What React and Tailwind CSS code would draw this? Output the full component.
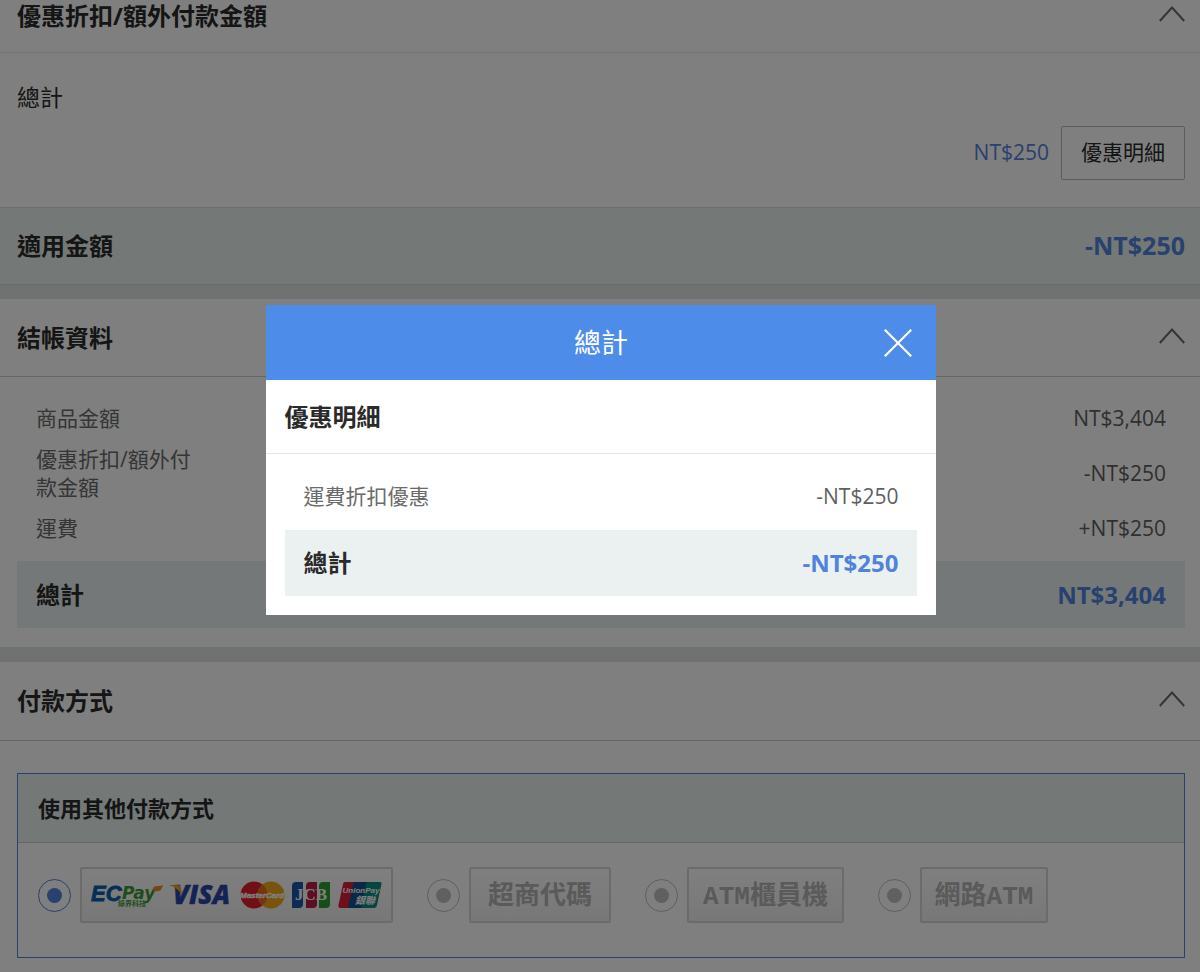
/**
 * CheckoutPage — checkout summary with the discount detail dialog on top.
 *
 * Sections: discounts, billing summary, payment method. The dialog lists the
 * discounts behind the "優惠明細" button.
 */
import { useState } from 'react';
import clsx from 'clsx';

const SUMMARY = [
  { label: '商品金額', value: 'NT$3,404' },
  { label: '優惠折扣/額外付款金額', value: '-NT$250' },
  { label: '運費', value: '+NT$250' },
];

const DISCOUNTS = [{ label: '運費折扣優惠', value: '-NT$250' }];

const PAYMENT_METHODS = [
  { id: 'card', label: null, boxClass: 'w-[313px]' },
  { id: 'cvs', label: '超商代碼', boxClass: 'w-[142px]' },
  { id: 'atm', label: 'ATM櫃員機', boxClass: 'w-[157px]' },
  { id: 'webatm', label: '網路ATM', boxClass: 'w-[128px]' },
];

function Chevron() {
  return (
    <svg width="26" height="16" viewBox="0 0 26 16" fill="none" stroke="#6a6a6a" strokeWidth="2" aria-hidden="true">
      <path d="M0.8 15 L13 1.6 L25.2 15" />
    </svg>
  );
}

function SectionHeader({ title, className }) {
  return (
    <header className={clsx('flex justify-between border-b pl-[17px] pr-[15px]', className)}>
      <h2 className="text-2xl font-bold text-[#2a2a2a]">{title}</h2>
      <button type="button" aria-label={`收合${title}`} className="flex h-8 items-start pt-[6px]">
        <Chevron />
      </button>
    </header>
  );
}

function TotalBar({ label, value, className }) {
  return (
    <div className={clsx('flex items-center justify-between bg-[#ebf1f0] px-[19px] text-2xl font-bold', className)}>
      <span className="text-[#2a2a2a]">{label}</span>
      <span className="text-[#5083dc]">{value}</span>
    </div>
  );
}

/* Card brands accepted through ECPay */
function CardLogos() {
  return (
    <svg width="293" height="46" viewBox="-1 -7 293 46" role="img" aria-label="ECPay VISA MasterCard JCB UnionPay">
      {/* ECPay */}
      <text x="0" y="22" fontSize="22" fontWeight="700" fontStyle="italic" fill="#0b5fae" stroke="#0b5fae" strokeWidth="0.8" fontFamily="'Liberation Sans', sans-serif">EC</text>
      <text x="31" y="20" fontSize="17" fontWeight="700" fontStyle="italic" fill="#3f9b35" fontFamily="'DejaVu Sans', sans-serif">Pay</text>
      <path d="M62 9 C64 6 68 8 72 6 C71 10 69 13 65 12 C63 13 62 12 62 9Z" fill="#f08a1c" />
      <text x="27" y="27" fontSize="7" fontWeight="700" fill="#3f9b35" fontFamily="'Noto Sans CJK TC', sans-serif">綠界科技</text>

      {/* VISA */}
      <text x="82" y="25" fontSize="26" fontWeight="800" fontStyle="italic" fill="#2b44a8" stroke="#2b44a8" strokeWidth="0.4" fontFamily="'Open Sans', sans-serif">VISA</text>
      <path d="M78 6 H86 Q89 6 90 9 L91 16 Q87 9 78 6Z" fill="#f0a020" />

      {/* MasterCard */}
      <circle cx="163" cy="16" r="13.5" fill="#e0202c" />
      <circle cx="180" cy="16" r="13.5" fill="#f2a81e" />
      <path d="M171.5 5.5 A13.5 13.5 0 0 1 171.5 26.5 A13.5 13.5 0 0 1 171.5 5.5Z" fill="#ea6a22" />
      <text x="171" y="19" textAnchor="middle" fontSize="8" fontWeight="700" fontStyle="italic" fill="#fff" stroke="#fff" strokeWidth="0.4" fontFamily="'Liberation Sans', sans-serif">MasterCard</text>

      {/* JCB */}
      <path d="M205 3 H212 V25 Q212 29 208 29 H201 V7 Q201 3 205 3Z" fill="#1f56a8" />
      <path d="M219 3 H226 V25 Q226 29 222 29 H215 V7 Q215 3 219 3Z" fill="#b81f48" />
      <path d="M232 3 H239 V25 Q239 29 235 29 H228 V7 Q228 3 232 3Z" fill="#2f9a34" />
      <text x="220" y="21" textAnchor="middle" fontSize="17" fontWeight="700" fill="#fff" fontFamily="'Liberation Serif', serif">JCB</text>

      {/* UnionPay */}
      <path d="M254 3 H266 L260 29 H249 Q247 29 247.5 26 L252 5 Q252.5 3 254 3Z" fill="#dc2038" />
      <path d="M264 3 H279 L273 29 H258 Q257 29 257.5 26 L262 5 Q262.5 3 264 3Z" fill="#17508a" />
      <path d="M277 3 H289 Q291 3 290.5 5 L286 26 Q285.4 29 283 29 H270 L275 5 Q275.5 3 277 3Z" fill="#0c8a80" />
      <text x="270" y="14" textAnchor="middle" fontSize="8" fontWeight="700" fontStyle="italic" fill="#fff" fontFamily="'Liberation Sans', sans-serif">UnionPay</text>
      <text x="264" y="25" fontSize="10" fontWeight="700" fontStyle="italic" fill="#fff" fontFamily="'Noto Sans CJK TC', sans-serif">銀聯</text>
    </svg>
  );
}

function PaymentOption({ method, checked, onSelect }) {
  return (
    <label className="flex items-center gap-[9px]">
      <input
        type="radio"
        name="payment"
        value={method.id}
        checked={checked}
        onChange={() => onSelect(method.id)}
        className="grid size-[33px] shrink-0 appearance-none place-content-center rounded-full border border-[#bdbdbd] before:size-[15px] before:rounded-full before:bg-[#c0c0c0] checked:border-[#5083dc] checked:before:bg-[#5083dc]"
      />
      <span
        className={clsx(
          'flex h-14 items-center justify-center rounded-xs border-2 border-[#d6d6d6] bg-linear-to-b from-white to-[#f0f0f0] font-["Liberation_Mono","Noto_Sans_CJK_TC",monospace] text-[26px] font-bold text-[#b4b4b4]',
          method.boxClass,
        )}
      >
        {method.label ? <span className="pt-1">{method.label}</span> : <CardLogos />}
      </span>
    </label>
  );
}

function DiscountDialog({ onClose }) {
  return (
    <div className="fixed inset-0 flex items-start justify-center bg-black/50 pl-0.5 pt-[305px]">
      <div role="dialog" aria-modal="true" aria-labelledby="discount-title" className="w-[56%] bg-white">
        <div className="grid h-[75px] grid-cols-[1fr_auto_1fr] items-center bg-[#4e8cea] px-6 text-white">
          <h2 id="discount-title" className="col-start-2 pt-0.5 text-[27px]">總計</h2>
          <button type="button" aria-label="關閉" onClick={onClose} className="justify-self-end">
            <svg width="28" height="28" viewBox="0 0 28 28" stroke="#fff" strokeWidth="2.2" aria-hidden="true">
              <path d="M0.8 0.8 L27.2 27.2 M27.2 0.8 L0.8 27.2" />
            </svg>
          </button>
        </div>
        <h3 className="flex h-[74px] items-center border-b border-[#e6e6e6] px-[19px] text-2xl font-bold text-[#2a2a2a]">
          優惠明細
        </h3>
        <div className="px-[19px] pb-[19px] pt-7">
          <dl className="pb-5">
            {DISCOUNTS.map(({ label, value }) => (
              <div key={label} className="flex justify-between px-[19px] leading-7">
                <dt className="text-[#6b6b6b]">{label}</dt>
                <dd className="text-[#5f5f5f]">{value}</dd>
              </div>
            ))}
          </dl>
          <TotalBar label="總計" value="-NT$250" className="h-[66px]" />
        </div>
      </div>
    </div>
  );
}

export default function App() {
  const [payment, setPayment] = useState('card');
  const [dialogOpen, setDialogOpen] = useState(true);

  return (
    <div className='bg-white font-["Open_Sans","Noto_Sans_CJK_TC",sans-serif] text-[21px] text-[#2a2a2a]'>
      {/* Discounts */}
      <section>
        <SectionHeader title="優惠折扣/額外付款金額" className="items-start border-[#e6e6e6] pb-5" />
        <div className="pb-[27px] pl-[17px] pr-[15px] pt-[30px]">
          <p className="text-[23px] leading-7">總計</p>
          <div className="mt-[15px] flex items-center justify-end gap-3">
            <span className="text-[#5083dc]">NT$250</span>
            <button
              type="button"
              onClick={() => setDialogOpen(true)}
              className="h-[54px] rounded-xs border border-[#b8b8b8] px-[19px]"
            >
              優惠明細
            </button>
          </div>
        </div>
        <div className="flex h-[78px] items-center justify-between border-y border-[#d4dad8] bg-[#e9f1ef] pl-[17px] pr-[15px] font-bold">
          <span className="text-2xl">適用金額</span>
          <span className="text-[25px] text-[#5083dc]">-NT$250</span>
        </div>
      </section>

      {/* Billing summary */}
      <section className="border-t-[14px] border-[#e1e4e3]">
        <SectionHeader title="結帳資料" className="h-[78px] items-center border-[#c8cccb]" />
        <div className="pb-[19px] pl-[17px] pr-[15px] pt-[27px]">
          <dl className="flex flex-col gap-[13px] px-[19px] pb-[19px] leading-7">
            {SUMMARY.map(({ label, value }) => (
              <div key={label} className="flex items-center justify-between">
                <dt className="max-w-[170px] text-[#6b6b6b]">{label}</dt>
                <dd className="text-[#5f5f5f]">{value}</dd>
              </div>
            ))}
          </dl>
          <TotalBar label="總計" value="NT$3,404" className="h-[67px]" />
        </div>
      </section>

      {/* Payment method */}
      <section className="border-t-[15px] border-[#e1e4e3]">
        <SectionHeader title="付款方式" className="h-[79px] items-center border-[#c8cccb]" />
        <div className="pb-[14px] pl-[17px] pr-[15px] pt-8">
          <div className="border border-[#5083dc]">
            <h3 className="flex h-[69px] items-center border-b border-[#c3d2d0] bg-[#e9f1ef] px-5 text-[22px] font-bold">
              使用其他付款方式
            </h3>
            <div className="flex flex-wrap gap-[34px] px-5 pb-[34px] pt-6">
              {PAYMENT_METHODS.map((method) => (
                <PaymentOption
                  key={method.id}
                  method={method}
                  checked={payment === method.id}
                  onSelect={setPayment}
                />
              ))}
            </div>
          </div>
        </div>
      </section>

      {dialogOpen && <DiscountDialog onClose={() => setDialogOpen(false)} />}
    </div>
  );
}
